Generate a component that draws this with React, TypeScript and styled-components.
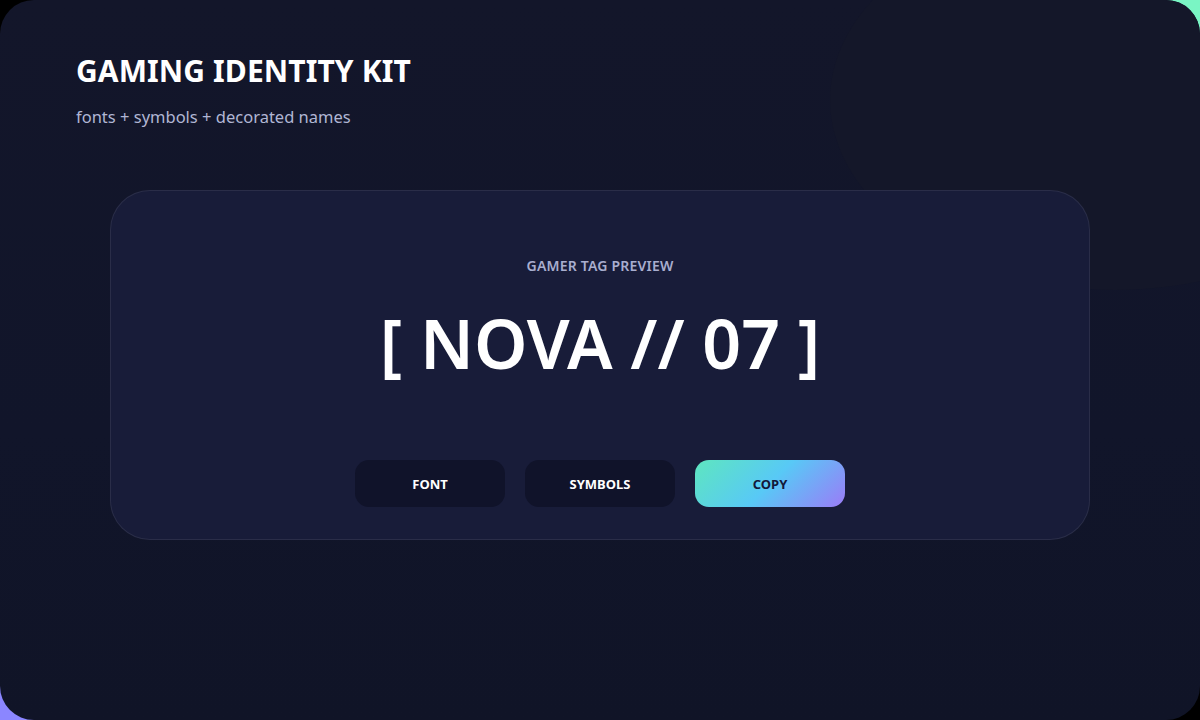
import React from 'react';
import styled, { createGlobalStyle } from 'styled-components';

const GlobalStyle = createGlobalStyle`
  html, body {
    margin: 0;
    padding: 0;
  }
  body {
    width: 1200px;
    height: 720px;
    overflow: hidden;
    font-family: "Noto Sans", "Open Sans", sans-serif;
    background:
      radial-gradient(circle at 100% 0%, #7af5c4 0, #7af5c4 60px, transparent 61px),
      radial-gradient(circle at 0% 100%, #8b86ff 0, #8b86ff 60px, transparent 61px),
      #000;
  }
`;

const Frame = styled.div`
  position: relative;
  width: 1200px;
  height: 720px;
  box-sizing: border-box;
  border-radius: 34px;
  overflow: hidden;
  background: linear-gradient(180deg, #13162a 0%, #11152a 60%, #101427 100%);
  padding: 50px 76px 0;
  display: flex;
  flex-direction: column;
`;

const Glow = styled.div`
  position: absolute;
  top: -90px;
  right: -200px;
  width: 570px;
  height: 380px;
  border-radius: 50%;
  background: #141729;
`;

const Header = styled.header`
  position: relative;
  display: flex;
  flex-direction: column;
  gap: 14px;
`;

const Title = styled.h1`
  margin: 0;
  font-size: 30px;
  line-height: 42px;
  font-weight: 700;
  color: #ffffff;
  letter-spacing: 0.1px;
`;

const Subtitle = styled.p`
  margin: 0;
  font-size: 16.5px;
  line-height: 22px;
  color: #b1b6d4;
`;

const Card = styled.section`
  position: relative;
  align-self: center;
  margin-top: 62px;
  width: 980px;
  height: 350px;
  box-sizing: border-box;
  border-radius: 40px;
  border: 1px solid rgba(255, 255, 255, 0.08);
  background: #181c39;
  display: flex;
  flex-direction: column;
  align-items: center;
  padding-top: 65px;
`;

const Label = styled.div`
  font-size: 14px;
  line-height: 20px;
  font-weight: 600;
  color: #a9aecf;
  letter-spacing: 0.2px;
`;

const Tag = styled.div`
  margin-top: 21px;
  font-size: 68px;
  line-height: 92px;
  font-weight: 600;
  color: #ffffff;
`;

const Actions = styled.div`
  margin-top: 71px;
  display: flex;
  gap: 20px;
`;

const Button = styled.button<{ $primary?: boolean }>`
  width: 150px;
  height: 47px;
  border: none;
  border-radius: 14px;
  font-family: inherit;
  font-size: 13px;
  font-weight: 700;
  cursor: pointer;
  color: ${p => (p.$primary ? '#13183a' : '#ffffff')};
  background: ${p =>
    p.$primary
      ? 'linear-gradient(135deg, #5ee6bf 0%, #58c9f6 50%, #9b7bf7 100%)'
      : '#10132a'};
`;

export default function App() {
  return (
    <>
      <GlobalStyle />
      <Frame>
        <Glow />
        <Header>
          <Title>GAMING IDENTITY KIT</Title>
          <Subtitle>fonts + symbols + decorated names</Subtitle>
        </Header>
        <Card>
          <Label>GAMER TAG PREVIEW</Label>
          <Tag>[ NOVA // 07 ]</Tag>
          <Actions>
            <Button>FONT</Button>
            <Button>SYMBOLS</Button>
            <Button $primary>COPY</Button>
          </Actions>
        </Card>
      </Frame>
    </>
  );
}
